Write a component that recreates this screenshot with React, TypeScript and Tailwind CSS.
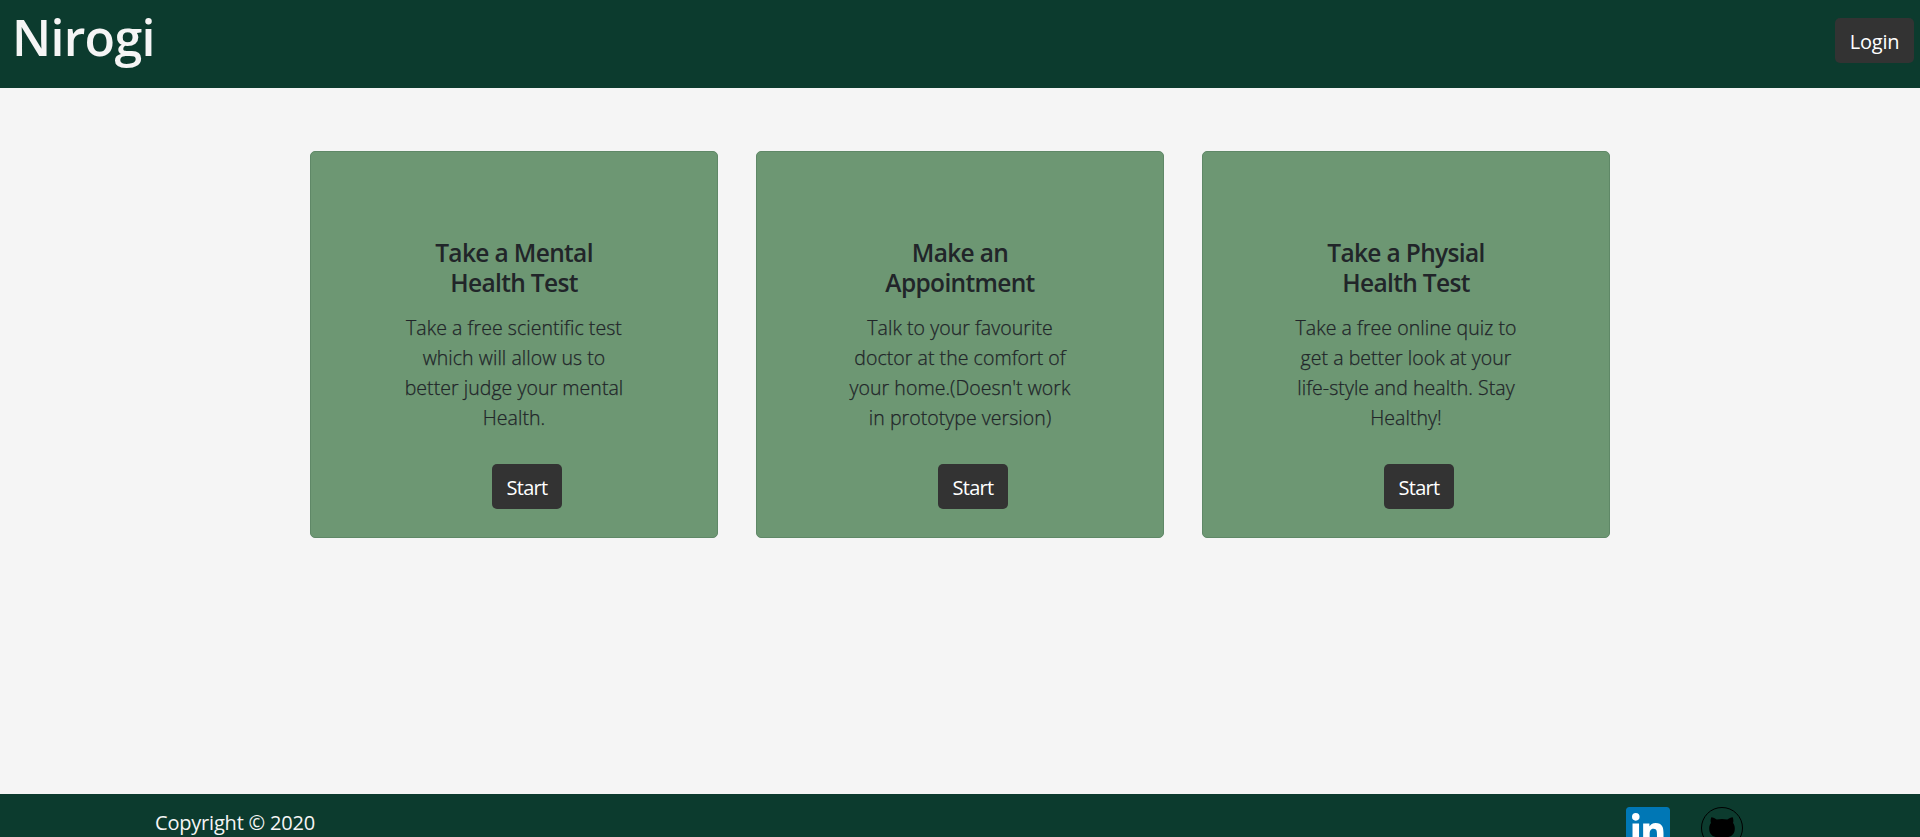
import React from 'react'

interface HealthService {
  title: string[]
  description: string[]
}

const services: HealthService[] = [
  {
    title: ['Take a Mental', 'Health Test'],
    description: ['Take a free scientific test', 'which will allow us to', 'better judge your mental', 'Health.'],
  },
  {
    title: ['Make an', 'Appointment'],
    description: ['Talk to your favourite', 'doctor at the comfort of', "your home.(Doesn't work", 'in prototype version)'],
  },
  {
    title: ['Take a Physial', 'Health Test'],
    description: ['Take a free online quiz to', 'get a better look at your', 'life-style and health. Stay', 'Healthy!'],
  },
]

/** LinkedIn mark, white letters on a blue tile. */
function LinkedInIcon() {
  return (
    <svg viewBox="0 0 24 24" className="w-11 h-11">
      <rect x="1.5" y="1.5" width="21" height="21" fill="#fff" />
      <path
        fill="#0077b5"
        d="M20.447 20.452h-3.554v-5.569c0-1.328-.027-3.037-1.852-3.037-1.853 0-2.136 1.445-2.136 2.939v5.667H9.351V9h3.414v1.561h.046c.477-.9 1.637-1.85 3.37-1.85 3.601 0 4.267 2.37 4.267 5.455v6.286zM5.337 7.433a2.062 2.062 0 0 1-2.063-2.065 2.064 2.064 0 1 1 2.063 2.065zm1.782 13.019H3.555V9h3.564v11.452zM22.225 0H1.771C.792 0 0 .774 0 1.729v20.542C0 23.227.792 24 1.771 24h20.451C23.2 24 24 23.227 24 22.271V1.729C24 .774 23.2 0 22.222 0h.003z"
      />
    </svg>
  )
}

/** GitHub cat head inside a thin ring. */
function GitHubIcon() {
  return (
    <svg viewBox="0 0 42 42" className="w-[42px] h-[42px]">
      <circle cx="21" cy="21" r="20.5" fill="none" stroke="#000" />
      <path d="M10.3 10.2c1.800 0 3.800 1.100 5.400 2.200 3.400-.7 7.200-.7 10.600 0 1.600-1.100 3.600-2.200 5.400-2.200.8 2 .9 4.200.3 5.900 1.200 1.400 1.800 3.200 1.800 5.300 0 6.600-4.300 9.300-12.800 9.300S8.200 28 8.200 21.400c0-2.100.6-3.900 1.800-5.300-.6-1.700-.5-3.900.3-5.900z" />
    </svg>
  )
}

/** Card with a short pitch and a button that starts the service. */
function ServiceCard({ service }: { service: HealthService }) {
  return (
    <div className="w-[408px] h-[387px] flex flex-col items-center rounded-[5px] border border-[#5f8867] bg-[#6d9773] pt-[86px] text-center text-[#212529]">
      <h5 className="text-[24.5px] leading-[30px] font-semibold tracking-[-0.65px]">
        {service.title.map((line) => (
          <span key={line} className="block whitespace-nowrap">{line}</span>
        ))}
      </h5>
      <p className="mt-[15px] text-[19.5px] leading-[30px] font-light tracking-[0.05px] [-webkit-text-stroke:0.25px_#212529]">
        {service.description.map((line) => (
          <span key={line} className="block whitespace-nowrap">{line}</span>
        ))}
      </p>
      <button className="mt-[31px] ml-[26px] w-[70px] h-[45px] rounded-[5px] bg-[#333333] pt-0.5 text-[20px] text-white tracking-[-0.7px]">
        Start
      </button>
    </div>
  )
}

export default function App() {
  return (
    <div className="h-[837px] flex flex-col overflow-hidden bg-[#f5f5f5] font-['Open_Sans','Noto_Sans',sans-serif]">
      <header className="h-[88px] shrink-0 flex items-start justify-between bg-[#0c3b2e] pl-[12px] pr-[6px]">
        <h1 className="mt-[7px] text-[50px] leading-[60px] font-semibold tracking-[-0.7px] text-[#f5f5f5]">Nirogi</h1>
        <button className="mt-[18px] w-[79px] h-[45px] rounded-[5px] bg-[#333333] pt-0.5 text-[20px] text-white tracking-[-0.2px]">
          Login
        </button>
      </header>

      <main className="h-[706px] shrink-0 flex justify-center gap-[38px] pt-[63px]">
        {services.map((service) => (
          <ServiceCard key={service.title.join(' ')} service={service} />
        ))}
      </main>

      <footer className="h-[60px] shrink-0 flex items-start justify-between bg-[#0c3b2e] pl-[155px] pr-[177px]">
        <p className="mt-[14px] text-[20px] leading-[30px] tracking-[-0.2px] text-[#f5f5f5]">Copyright © 2020</p>
        <div className="mt-[13px] flex items-start gap-[31px]">
          <LinkedInIcon />
          <GitHubIcon />
        </div>
      </footer>
    </div>
  )
}
